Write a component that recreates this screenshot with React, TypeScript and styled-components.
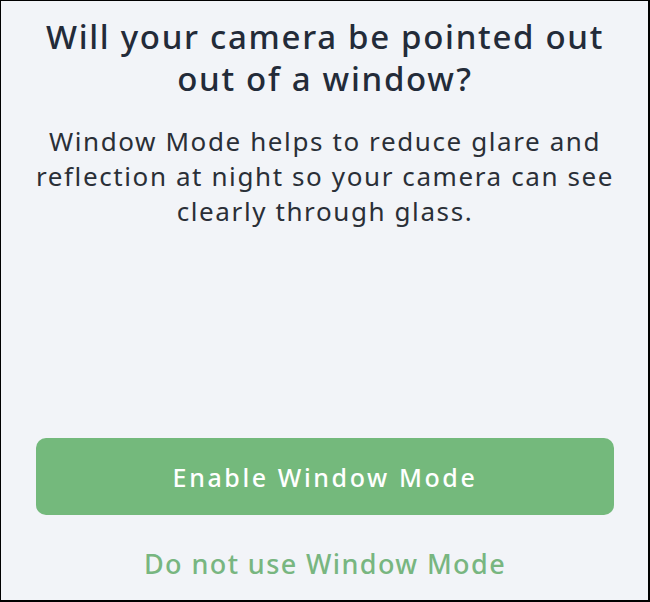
import styled, { createGlobalStyle } from 'styled-components'

const GlobalStyle = createGlobalStyle`
  html, body {
    margin: 0;
    padding: 0;
    background: #f2f4f8;
  }
  * {
    box-sizing: border-box;
  }
`

const Screen = styled.div`
  width: 650px;
  height: 602px;
  display: flex;
  flex-direction: column;
  align-items: center;
  background: #f2f4f8;
  border-style: solid;
  border-color: #000;
  border-width: 1px 2px 2px 1px;
  font-family: 'Noto Sans', sans-serif;
  padding: 15px 34px 0 35px;
`

const Title = styled.h1`
  margin: 0;
  font-size: 33px;
  font-weight: 500;
  letter-spacing: 1.7px;
  line-height: 42px;
  color: #232b39;
  text-align: center;
  white-space: nowrap;
`

const Body = styled.p`
  margin: 24px 0 0;
  font-size: 26px;
  font-weight: 400;
  letter-spacing: 1.6px;
  line-height: 35px;
  color: #2a2f37;
  text-align: center;
  white-space: nowrap;
`

const Actions = styled.div`
  margin-top: auto;
  width: 100%;
  display: flex;
  flex-direction: column;
  align-items: center;
  gap: 30px;
  padding-bottom: 18px;
`

const PrimaryButton = styled.button`
  width: 100%;
  height: 77px;
  border: none;
  border-radius: 10px;
  background: #74b97c;
  color: #fff;
  font-family: inherit;
  font-size: 25px;
  font-weight: 500;
  letter-spacing: 2.6px;
  cursor: pointer;
`

const TextButton = styled.button`
  border: none;
  background: none;
  padding: 0;
  color: #78b680;
  font-family: inherit;
  font-size: 27px;
  font-weight: 500;
  letter-spacing: 1.4px;
  cursor: pointer;
`

export default function App() {
  return (
    <>
      <GlobalStyle />
      <Screen>
        <Title>
          Will your camera be pointed out
          <br />
          out of a window?
        </Title>
        <Body>
          Window Mode helps to reduce glare and
          <br />
          reflection at night so your camera can see
          <br />
          clearly through glass.
        </Body>
        <Actions>
          <PrimaryButton>Enable Window Mode</PrimaryButton>
          <TextButton>Do not use Window Mode</TextButton>
        </Actions>
      </Screen>
    </>
  )
}
